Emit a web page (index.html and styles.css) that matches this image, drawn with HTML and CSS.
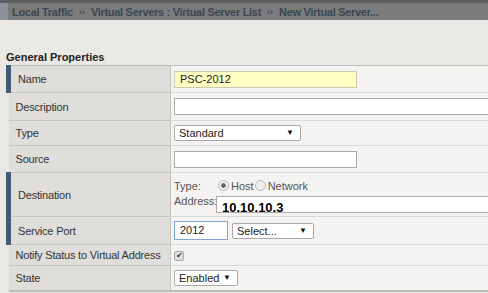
FILE: index.html
```html
<!DOCTYPE html>
<html lang="en">
<head>
  <meta charset="UTF-8" />
  <title>New Virtual Server</title>
  <link rel="stylesheet" href="styles.css">
</head>
<body>
  <div class="crumbs">
    <span>Local Traffic</span>
    <span class="sep">››</span>
    <span>Virtual Servers : Virtual Server List</span>
    <span class="sep">››</span>
    <span>New Virtual Server...</span>
  </div>

  <h2 class="section">General Properties</h2>

  <table class="props">
    <colgroup>
      <col class="c-label">
      <col>
    </colgroup>
    <tr class="r-name">
      <th class="req">Name</th>
      <td><div class="field yellow w-182">PSC-2012</div></td>
    </tr>
    <tr class="r-desc">
      <th>Description</th>
      <td><div class="field w-full"></div></td>
    </tr>
    <tr class="r-type">
      <th>Type</th>
      <td><div class="select w-127">Standard<span class="arrow">▼</span></div></td>
    </tr>
    <tr class="r-source">
      <th>Source</th>
      <td><div class="field w-182"></div></td>
    </tr>
    <tr class="r-dest">
      <th class="req">Destination</th>
      <td>
        <div class="dest-line">
          <span class="dest-label">Type:</span>
          <span class="radio on"></span><span class="radio-text">Host</span>
          <span class="radio"></span><span class="radio-text">Network</span>
        </div>
        <div class="dest-line addr">
          <span class="dest-label short">Address:</span>
          <div class="addr-box"><span>10.10.10.3</span></div>
        </div>
      </td>
    </tr>
    <tr class="r-port">
      <th class="req">Service Port</th>
      <td>
        <div class="inline">
          <div class="field focus w-54">2012</div>
          <div class="select w-82">Select...<span class="arrow">▼</span></div>
        </div>
      </td>
    </tr>
    <tr class="r-notify">
      <th>Notify Status to Virtual Address</th>
      <td><span class="check">✔</span></td>
    </tr>
    <tr class="r-state">
      <th>State</th>
      <td><div class="select w-64">Enabled<span class="arrow">▼</span></div></td>
    </tr>
  </table>
</body>
</html>
```
FILE: styles.css
```css
html, body {
  margin: 0;
  padding: 0;
}

body {
  font-family: "Liberation Sans", Arial, sans-serif;
  font-size: 11px;
  color: #333;
  background: #e9e8e4;
  width: 488px;
  height: 293px;
  overflow: hidden;
}

.crumbs {
  height: 17px;
  border-top: 3px solid #5f5f5f;
  background: #7b7b7b;
  padding-left: 12px;
  display: flex;
  align-items: center;
  gap: 6px;
  color: #3b4752;
  font-size: 11px;
  font-weight: bold;
  letter-spacing: -0.3px;
  white-space: nowrap;
  box-shadow: inset 8px 0 0 #8c929a;
}

.crumbs .sep {
  font-size: 9px;
  letter-spacing: 0;
}

.section {
  margin: 30px 0 1px 6px;
  font-size: 11px;
  font-weight: bold;
  color: #222;
  line-height: 14px;
}

.props {
  border-collapse: collapse;
  table-layout: fixed;
  margin-left: 6px;
  width: 600px;
  border-top: 1px solid #bdbcb8;
  border-bottom: 2px solid #bdbcb8;
}

.c-label {
  width: 162px;
}

.props th {
  text-align: left;
  font-weight: normal;
  color: #333;
  background: #dfdedb;
  padding: 0 0 0 7px;
  border-right: 1px solid #c4c3bf;
  border-bottom: 1px solid #c9c8c4;
  white-space: nowrap;
  letter-spacing: -0.2px;
}

.props th.req {
  border-left: 5px solid #3f5d79;
  padding-left: 7px;
}

.props td {
  background: #f4f3f1;
  padding: 0 0 0 3px;
  border-bottom: 1px solid #d8d7d3;
}

.inline {
  display: flex;
  align-items: center;
  gap: 4px;
}

.r-name { height: 27px; }
.r-desc { height: 28px; }
.r-type { height: 25px; }
.r-source { height: 27px; }
.r-dest { height: 44px; }
.r-port { height: 28px; }
.r-notify { height: 21px; }
.r-state { height: 25px; }

.field {
  box-sizing: border-box;
  height: 17px;
  border: 1px solid #a9a9a9;
  background: #fff;
  padding-left: 5px;
  line-height: 15px;
  color: #222;
}

.field.yellow {
  background: #ffffc4;
  border-color: #c9c9b4;
}

.field.focus {
  height: 19px;
  line-height: 17px;
  border-color: #7fa6d4;
}

.select {
  box-sizing: border-box;
  position: relative;
  height: 16px;
  border: 1px solid #a9a9a9;
  border-radius: 2px;
  background: #fff;
  padding-left: 4px;
  line-height: 14px;
  color: #222;
}

.select .arrow {
  position: absolute;
  right: 6px;
  top: 0;
  font-size: 8px;
  color: #111;
}

.w-182 { width: 183px; }
.w-full { width: 340px; }
.w-127 { width: 127px; }
.w-54 { width: 54px; }
.w-82 { width: 82px; }
.w-64 { width: 64px; }

.dest-line {
  display: flex;
  align-items: center;
  height: 18px;
  color: #555;
}

.dest-label {
  width: 44px;
}

.dest-label.short {
  width: 42px;
}

.radio {
  box-sizing: border-box;
  width: 11px;
  height: 11px;
  border-radius: 50%;
  border: 1px solid #b8b8b8;
  background: #eee;
  margin-right: 2px;
}

.radio.on {
  background: radial-gradient(circle, #666 0 2px, #eee 2.5px);
}

.radio-text {
  margin-right: 1px;
}

.dest-line.addr {
  align-items: flex-start;
}

.addr-box {
  box-sizing: border-box;
  width: 300px;
  height: 17px;
  margin-top: 1px;
  border: 1px solid #a9a9a9;
  border-right: none;
  background: #fff;
  overflow: hidden;
  padding-left: 5px;
}

.addr-box span {
  display: block;
  font-size: 13px;
  font-weight: bold;
  color: #000;
  line-height: 13px;
  padding-top: 4px;
}

.check {
  display: inline-block;
  box-sizing: border-box;
  width: 10px;
  height: 10px;
  border: 1px solid #aaa;
  border-radius: 2px;
  background: #ddd;
  color: #444;
  font-size: 8px;
  line-height: 8px;
  text-align: center;
  vertical-align: middle;
}
```
